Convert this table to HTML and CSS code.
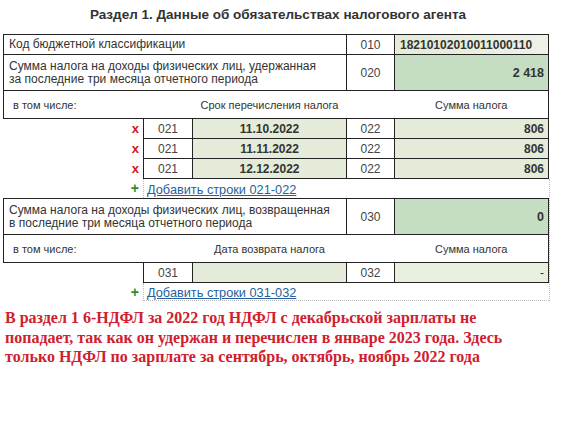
FILE: index.html
```html
<!DOCTYPE html>
<html lang="ru">
<head>
<meta charset="utf-8">
<link rel="stylesheet" href="styles.css">
</head>
<body>
<div class="page">
  <h1 class="title">Раздел 1. Данные об обязательствах налогового агента</h1>
  <table class="grid">
    <colgroup><col class="c1"><col class="c2"><col class="c3"><col class="c4"><col class="c5"></colgroup>
    <tr class="r20">
      <td colspan="3" class="lbl">Код бюджетной классификации</td>
      <td class="code">010</td>
      <td class="kbk">18210102010011000110</td>
    </tr>
    <tr class="r36">
      <td colspan="3" class="lbl">Сумма налога на доходы физических лиц, удержанная<br>за последние три месяца отчетного периода</td>
      <td class="code">020</td>
      <td class="val dark">2 418</td>
    </tr>
    <tr class="hdr">
      <td colspan="2" class="hl">в том числе:</td>
      <td class="hc">Срок перечисления налога</td>
      <td class="hm"></td>
      <td class="hc hr">Сумма налога</td>
    </tr>
    <tr class="sub">
      <td class="del"><span class="x">x</span></td>
      <td class="code">021</td>
      <td class="date">11.10.2022</td>
      <td class="code">022</td>
      <td class="val">806</td>
    </tr>
    <tr class="sub">
      <td class="del"><span class="x">x</span></td>
      <td class="code">021</td>
      <td class="date">11.11.2022</td>
      <td class="code">022</td>
      <td class="val">806</td>
    </tr>
    <tr class="sub">
      <td class="del"><span class="x">x</span></td>
      <td class="code">021</td>
      <td class="date">12.12.2022</td>
      <td class="code">022</td>
      <td class="val">806</td>
    </tr>
  </table>
  <div class="more">
    <div class="addrow">
      <span class="plus">+</span>
      <div class="linkcell"><a href="#" class="add">Добавить строки 021-022</a></div>
    </div>
    <table class="grid inner">
      <colgroup><col class="c1"><col class="c2"><col class="c3"><col class="c4"><col class="c5"></colgroup>
      <tr class="r36">
        <td colspan="3" class="lbl">Сумма налога на доходы физических лиц, возвращенная<br>в последние три месяца отчетного периода</td>
        <td class="code">030</td>
        <td class="val dark">0</td>
      </tr>
      <tr class="hdr">
        <td colspan="2" class="hl">в том числе:</td>
        <td class="hc">Дата возврата налога</td>
        <td class="hm"></td>
        <td class="hc hr">Сумма налога</td>
      </tr>
      <tr class="sub">
        <td class="del"></td>
        <td class="code">031</td>
        <td class="date"></td>
        <td class="code">032</td>
        <td class="val light">-</td>
      </tr>
    </table>
    <div class="addrow last">
      <span class="plus">+</span>
      <div class="linkcell"><a href="#" class="add">Добавить строки 031-032</a></div>
    </div>
  </div>
  <p class="note">В раздел 1 6-НДФЛ за 2022 год НДФЛ с декабрьской зарплаты не попадает, так как он удержан и перечислен в январе 2023 года. Здесь только НДФЛ по зарплате за сентябрь, октябрь, ноябрь 2022 года</p>
</div>
</body>
</html>
```

FILE: styles.css
```css
html, body {
  margin: 0;
  padding: 0;
  background: #fff;
}
.page {
  padding: 0 0 0 3px;
  font-family: "Liberation Sans", Arial, sans-serif;
  color: #333;
}
.title {
  margin: 0;
  height: 34px;
  line-height: 29px;
  font-size: 13.5px;
  font-weight: bold;
  color: #333;
  text-align: center;
  width: 550px;
}
.grid {
  border-collapse: collapse;
  table-layout: fixed;
  width: 546px;
  font-size: 12px;
}
.grid td {
  padding: 0;
  border: 1px solid #222;
  overflow: hidden;
  white-space: nowrap;
}
.c1 { width: 140px; }
.c2 { width: 49px; }
.c3 { width: 154px; }
.c4 { width: 48px; }
.c5 { width: 154px; }
.r20 td { height: 19px; }
.r36 td { height: 35px; }
.hdr td { height: 27px; border-left: none; border-right: none; font-size: 11px; }
.hdr td.hl { border-left: 1px solid #222; padding-left: 9px; }
.hdr td.hr { border-right: 1px solid #222; }
.hc { text-align: center; }
.sub td { height: 19px; }
.lbl {
  padding-left: 5px !important;
  line-height: 13px;
}
.code {
  text-align: center;
  color: #444;
  background: #fff;
}
.kbk {
  font-weight: bold;
  padding-left: 5px !important;
  background: linear-gradient(to right, #e4ebd8, #eef2e6);
  color: #333;
}
.val {
  text-align: right;
  font-weight: bold;
  padding-right: 4px !important;
  background: #e4ecd9;
  color: #333;
}
.val.dark {
  background: #c4ddc3;
  font-size: 12.5px;
}
.val.light {
  background: #e8efdf;
  font-weight: normal;
}
.date {
  text-align: center;
  font-weight: bold;
  background: #e4ecd9;
  color: #333;
}
.grid .sub td.del {
  border-top: none;
  border-left: none;
  border-bottom: none;
  text-align: right;
  padding-right: 4px;
}
.x {
  color: #cc1a1a;
  font-weight: bold;
  font-size: 13px;
}
.more {
  width: 546px;
  border-right: 1px dotted #bbb;
}
.addrow {
  display: flex;
  height: 19px;
  align-items: stretch;
}
.addrow.last {
  height: 18px;
}
.plus {
  width: 136px;
  text-align: right;
  padding-right: 4px;
  color: #2e8b2e;
  font-weight: bold;
  font-size: 14px;
  line-height: 19px;
}
.linkcell {
  flex: 1;
  border-left: 1px dotted #bbb;
  padding-left: 3px;
  line-height: 19px;
}
.addrow.last .linkcell {
  border-bottom: 1px dotted #bbb;
  line-height: 18px;
}
.add {
  color: #275f9c;
  font-size: 12.75px;
  text-decoration: underline;
}
.note {
  margin: 7px 0 0 2px;
  width: 530px;
  font-family: "Liberation Serif", "Times New Roman", serif;
  font-weight: bold;
  font-size: 16px;
  line-height: 19.5px;
  color: #d0202e;
}
```
